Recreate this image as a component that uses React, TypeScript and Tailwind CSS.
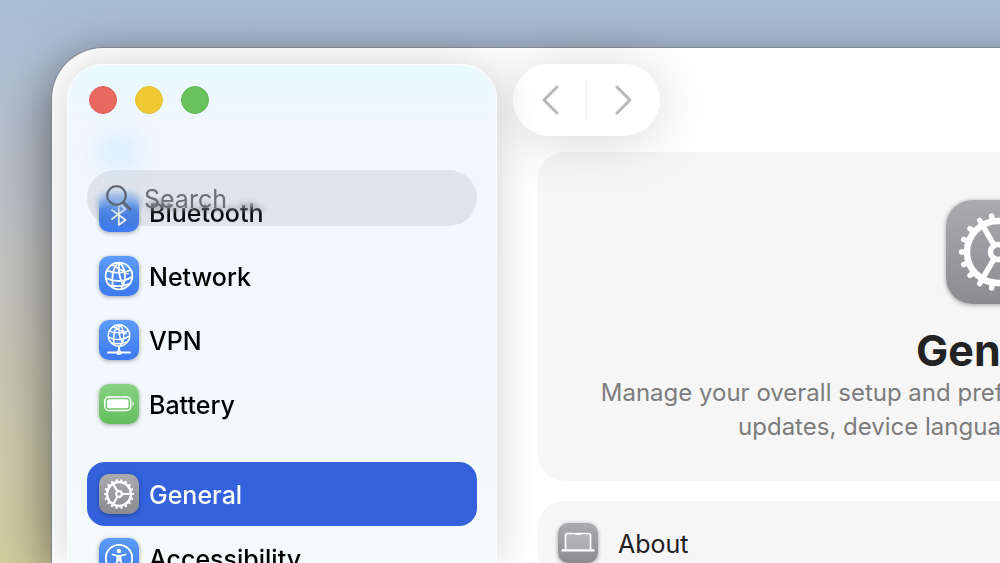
import type { ReactNode } from "react"
import clsx from "clsx"

interface SidebarItem {
  label: string
  tint: string
  icon: ReactNode
  selected?: boolean
}

const teeth = Array.from({ length: 18 }, (_, i) => i * 20)

function GearIcon({ className }: { className: string }) {
  return (
    <svg viewBox="-52 -52 104 104" className={className} fill="none" stroke="currentColor" aria-hidden="true">
      <circle r="31" strokeWidth="6.5" />
      <circle r="7.500" strokeWidth="5.500" />
      {[0, 120, 240].map((angle) => (
        <path key={angle} d="M9 0H30" strokeWidth="5.500" transform={`rotate(${angle})`} />
      ))}
      {teeth.map((angle) => (
        <path key={angle} d="M33 0H36.500" strokeWidth="5.500" strokeLinecap="round" transform={`rotate(${angle})`} />
      ))}
    </svg>
  )
}

function BluetoothIcon() {
  return (
    <svg viewBox="0 0 40 40" className="size-10" fill="none" stroke="currentColor" strokeWidth="1.8" strokeLinejoin="round" strokeLinecap="round" aria-hidden="true">
      <path d="M13 18 26.500 28 19.800 33V11L26.500 17 13 27" />
    </svg>
  )
}

function Globe() {
  return (
    <>
      <circle cx="20" cy="20" r="13.4" />
      <path d="M19 6.800C14 12 12 20 14 31.500M21 6.800C27 13 28 24 22 33M8 14.500C15 17.500 25 17.500 32 14M7 22C15 26.500 26 26 33.300 20.500M10 29C16 30.500 24 30.500 30 28M20.500 6.800C19 13 19.500 20 24 29M13 8.800 29.500 18" />
    </>
  )
}

function NetworkIcon() {
  return (
    <svg viewBox="0 0 40 40" className="size-10" fill="none" stroke="currentColor" strokeWidth="1.8" aria-hidden="true">
      <Globe />
    </svg>
  )
}

function VpnIcon() {
  return (
    <svg viewBox="0 0 40 40" className="size-10" fill="none" stroke="currentColor" strokeWidth="1.9" aria-hidden="true">
      <g transform="translate(4 -.5) scale(.8)">
        <Globe />
      </g>
      <path d="M20 26.500V31M9 32.500H31" strokeLinecap="round" />
      <circle cx="20" cy="32.500" r="2.600" fill="currentColor" stroke="none" />
    </svg>
  )
}

function BatteryIcon() {
  return (
    <svg viewBox="0 0 40 40" className="size-10" fill="none" stroke="currentColor" aria-hidden="true">
      <rect x="5.800" y="13" width="26" height="13.500" rx="4" strokeWidth="1.500" />
      <rect x="8" y="15.200" width="21.600" height="9.100" rx="2" fill="currentColor" stroke="none" />
      <path d="M33.500 17.500C35.500 18.500 35.500 21 33.500 22Z" fill="currentColor" stroke="none" />
    </svg>
  )
}

function AccessibilityIcon() {
  return (
    <svg viewBox="0 0 40 40" className="size-10" fill="none" stroke="currentColor" strokeLinecap="round" strokeLinejoin="round" aria-hidden="true">
      <circle cx="20" cy="20" r="13.200" strokeWidth="1.800" />
      <circle cx="20" cy="13" r="2.200" fill="currentColor" stroke="none" />
      <path d="M13.500 16.500 18.500 17.800V22L16 29M26.500 16.500 21.500 17.800V22L24 29" strokeWidth="1.800" />
      <path d="M18.500 17.500H21.500V23H18.500Z" fill="currentColor" strokeWidth="1" />
    </svg>
  )
}

function LaptopIcon() {
  return (
    <svg viewBox="0 0 40 40" className="size-10" fill="none" stroke="currentColor" aria-hidden="true">
      <path d="M7.500 26.500V12.500Q7.500 10.500 9.500 10.500H30.500Q32.500 10.500 32.500 12.500V26.500" fill="#ffffff33" strokeWidth="1.700" />
      <path d="M3.500 27.300H36.500" strokeWidth="2.200" />
      <path d="M17 11H23V12H17Z" fill="currentColor" stroke="none" />
    </svg>
  )
}

const blue = "bg-linear-to-b from-[#5d9bfb] to-[#3b79ee]"
const gray = "bg-linear-to-b from-[#ababaf] to-[#8b8b90]"

const groups: SidebarItem[][] = [
  [
    { label: "Bluetooth", tint: blue, icon: <BluetoothIcon /> },
    { label: "Network", tint: blue, icon: <NetworkIcon /> },
    { label: "VPN", tint: blue, icon: <VpnIcon /> },
    { label: "Battery", tint: "bg-linear-to-b from-[#87d283] to-[#62bd5c]", icon: <BatteryIcon /> },
  ],
  [
    { label: "General", tint: gray, icon: <GearIcon className="size-10" />, selected: true },
    { label: "Accessibility", tint: blue, icon: <AccessibilityIcon /> },
  ],
]

function IconTile({ tint, children }: { tint: string; children: ReactNode }) {
  return (
    <span className={clsx("block size-10 shrink-0 overflow-hidden rounded-[10px] text-white shadow-[0_1px_4px_rgba(0,0,0,0.35)]", tint)}>
      {children}
    </span>
  )
}

function Sidebar() {
  return (
    <aside className="relative mt-4 ml-[15px] w-[430px] shrink-0 overflow-hidden rounded-t-[36px] border border-b-0 border-white/70 bg-linear-to-b from-[#e8faff] via-[#f1f7fe] via-12% to-[#f4f9fa] shadow-[0_0_44px_rgba(0,0,0,0.18)]">
      {/* Scrolled list, fading out under the header */}
      <nav className="flex flex-col gap-[26px] px-[19px] pt-[115px] mask-[linear-gradient(to_bottom,transparent_120px,black_144px)]">
        {groups.map((group) => (
          <ul key={group[0].label}>
            {group.map((item) => (
              <li key={item.label}>
                <a
                  href="#"
                  className={clsx(
                    "flex h-16 items-center gap-[10px] rounded-[18px] px-3 text-[25px] font-medium",
                    item.selected ? "bg-[#3462dc] text-white" : "text-black"
                  )}
                >
                  <IconTile tint={item.tint}>{item.icon}</IconTile>
                  <span className="pt-[3px]">{item.label}</span>
                </a>
              </li>
            ))}
          </ul>
        ))}
      </nav>

      {/* Softens the rows that pass beneath the header */}
      <div className="absolute inset-x-0 top-0 h-[150px] backdrop-blur-[3px] mask-[linear-gradient(to_bottom,black_134px,transparent)]" />

      {/* Header floats over the list */}
      <div className="absolute inset-x-0 top-0 px-[19px] pt-[21px]">
        <div className="flex gap-[18px] px-0.5">
          <button type="button" aria-label="Close" className="size-7 rounded-full border border-[#df5c54] bg-[#e9695f]" />
          <button type="button" aria-label="Minimize" className="size-7 rounded-full border border-[#e4be2c] bg-[#f0c932]" />
          <button type="button" aria-label="Zoom" className="size-7 rounded-full border border-[#5eb553] bg-[#69c25e]" />
        </div>
        <div className="mx-3 mt-5 h-9 w-10 rounded-full bg-[#b5dcff]/40 blur-md" />
        <label className="flex h-14 items-center gap-[11px] rounded-full bg-[#505a64]/12 px-[18px]">
          <svg viewBox="0 0 28 28" className="size-7 shrink-0 text-[#5d656e]" fill="none" stroke="currentColor" strokeWidth="2.200" strokeLinecap="round" aria-hidden="true">
            <circle cx="11.500" cy="11.500" r="9.300" />
            <path d="M18.500 18.500 25 25" strokeWidth="3" />
          </svg>
          <input
            type="search"
            aria-label="Search"
            placeholder="Search"
            className="w-full min-w-0 bg-transparent pt-[3px] text-[25px] outline-none placeholder:text-[#6a7077]"
          />
        </label>
      </div>
    </aside>
  )
}

function Chevron({ d }: { d: string }) {
  return (
    <svg viewBox="0 0 20 32" className="h-8 w-5" fill="none" stroke="currentColor" strokeWidth="3" strokeLinecap="round" strokeLinejoin="round" aria-hidden="true">
      <path d={d} />
    </svg>
  )
}

function Content() {
  return (
    <main className="flex min-w-[961px] flex-1 flex-col pt-4 pl-4">
      <div className="flex h-[72px] shrink-0 items-center self-start rounded-full bg-white text-[#b8b8b8] shadow-[0_4px_56px_rgba(0,0,0,0.16)]">
        <button type="button" aria-label="Back" className="flex h-full w-[73px] items-center justify-center">
          <Chevron d="M17 3 4 16 17 29" />
        </button>
        <span className="h-10 w-px bg-[#ececec]" />
        <button type="button" aria-label="Forward" className="flex h-full w-[73px] items-center justify-center">
          <Chevron d="M3 3 16 16 3 29" />
        </button>
      </div>

      <div className="mt-4 ml-[25px] flex flex-col gap-5">
        <section className="flex shrink-0 flex-col items-center rounded-[26px] bg-black/[0.035] px-8 pt-12 pb-[37px] text-center">
          <span className={clsx("block size-[104px] rounded-[26px] text-white shadow-[0_1px_5px_rgba(0,0,0,0.35)]", gray)}>
            <GearIcon className="size-[104px]" />
          </span>
          <h1 className="mt-5 text-[43px] leading-[52px] font-bold text-[#232323]">General</h1>
          <p className="text-2xl leading-[34px] text-[#7c7c7c]">
            Manage your overall setup and preferences for Mac, such as software
            <br />
            updates, device language, AirDrop, and more.
          </p>
        </section>

        <section className="rounded-[26px] bg-black/[0.035] px-5">
          <a href="#" className="flex h-[84px] items-center gap-5 text-[25px] text-[#202020]">
            <IconTile tint={gray}>
              <LaptopIcon />
            </IconTile>
            <span className="pt-[3px]">About</span>
          </a>
        </section>
      </div>
    </main>
  )
}

export default function App() {
  return (
    <div className="flex h-screen overflow-hidden bg-linear-to-b from-[#a9bdd8] via-[#c4c4c3] via-45% to-[#d3d0a0] pt-[47px] pl-[51px] font-['Inter',sans-serif]">
      <div className="flex flex-1 shrink-0 rounded-tl-[52px] border-t border-l border-[#858b96] bg-white shadow-[0_18px_60px_rgba(0,0,0,0.5)]">
        <Sidebar />
        <Content />
      </div>
    </div>
  )
}
